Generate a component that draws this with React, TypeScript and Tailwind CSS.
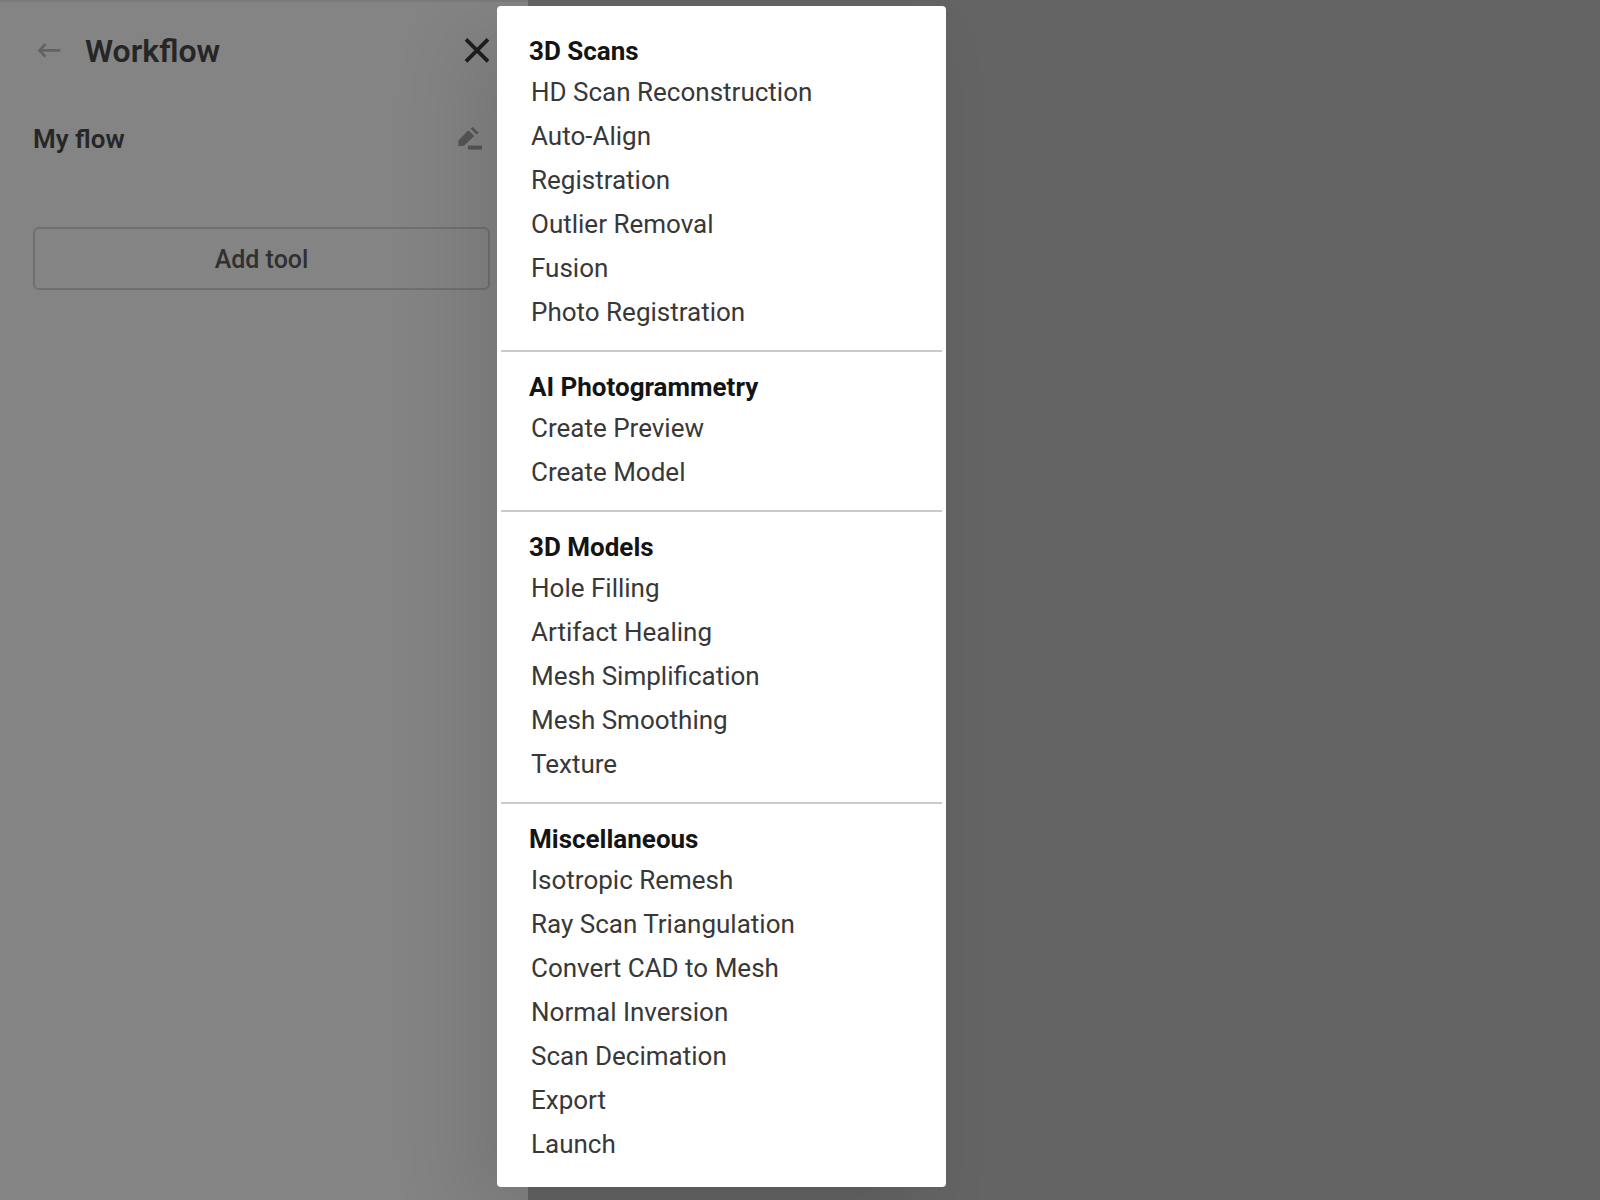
type ToolGroup = {
  title: string;
  tools: string[];
};

const GROUPS: ToolGroup[] = [
  {
    title: "3D Scans",
    tools: [
      "HD Scan Reconstruction",
      "Auto-Align",
      "Registration",
      "Outlier Removal",
      "Fusion",
      "Photo Registration",
    ],
  },
  { title: "AI Photogrammetry", tools: ["Create Preview", "Create Model"] },
  {
    title: "3D Models",
    tools: ["Hole Filling", "Artifact Healing", "Mesh Simplification", "Mesh Smoothing", "Texture"],
  },
  {
    title: "Miscellaneous",
    tools: [
      "Isotropic Remesh",
      "Ray Scan Triangulation",
      "Convert CAD to Mesh",
      "Normal Inversion",
      "Scan Decimation",
      "Export",
      "Launch",
    ],
  },
];

function BackIcon() {
  return (
    <svg width="24" height="24" viewBox="0 0 24 24" fill="none" stroke="currentColor" strokeWidth="2.6" aria-hidden="true">
      <path d="M23.4 11.4H3M8.4 5.2 2.4 11.4 8.4 17.6" />
    </svg>
  );
}

function CloseIcon() {
  return (
    <svg width="26" height="26" viewBox="0 0 26 26" fill="none" stroke="currentColor" strokeWidth="3.8" aria-hidden="true">
      <path d="M2 1.4 24 23.4M24 1.4 2 23.4" />
    </svg>
  );
}

function RenameIcon() {
  return (
    <svg width="24" height="24" viewBox="0 0 24 24" fill="currentColor" aria-hidden="true">
      <path d="M.4 19.2.4 13.4 10.4 3.2 16.2 9 6 18.8Z" />
      <path d="M12.6 1.4 14.6 0 20.6 5.8 18.6 7.4Z" />
      <path d="M10 18.6H24V22.6H10Z" />
    </svg>
  );
}

function WorkflowPanel() {
  return (
    <aside className="w-[528px] shrink-0 border-t-2 border-[#7a7a7a] bg-[#848484] pr-[38px] pl-[33px] text-[#262626]">
      <header className="flex items-center pt-[29px]">
        <button type="button" aria-label="Back" className="ml-1 text-[#626262]">
          <BackIcon />
        </button>
        <h1 className="ml-6 flex-1 text-[32px] leading-10 font-semibold">Workflow</h1>
        <button type="button" aria-label="Close" className="text-[#1e1e1e]">
          <CloseIcon />
        </button>
      </header>

      <div className="mt-[52px] flex items-center justify-between pr-2">
        <h2 className="text-[26px] leading-8 font-semibold">My flow</h2>
        <button type="button" aria-label="Rename flow" className="text-[#565656]">
          <RenameIcon />
        </button>
      </div>

      <button
        type="button"
        className="mt-[72px] h-[63px] w-full rounded-md border-2 border-[#707070] pt-0.5 text-[25px] leading-8 font-medium text-[#303030]"
      >
        Add tool
      </button>
    </aside>
  );
}

function ToolMenu() {
  return (
    <div
      role="menu"
      className="absolute top-[6px] left-[497px] w-[449px] rounded-[4px] bg-white p-1 pb-[5px] shadow-[-30px_30px_80px_rgba(0,0,0,0.11)]"
    >
      {GROUPS.map((group) => (
        <section
          key={group.title}
          className="border-t-2 border-[#cacaca] pt-[23px] pb-4 first:border-t-0 first:pt-[29px]"
        >
          <h3 className="mb-[7px] px-7 text-[26px] leading-6 font-bold text-[#141414]">{group.title}</h3>
          {group.tools.map((tool) => (
            <button
              key={tool}
              type="button"
              role="menuitem"
              className="block h-11 w-full px-[30px] text-left text-[26px] leading-8 text-[#383838]"
            >
              {tool}
            </button>
          ))}
        </section>
      ))}
    </div>
  );
}

export default function App() {
  return (
    <div className="relative flex min-h-screen bg-[#646464] font-['Roboto','Liberation_Sans',sans-serif]">
      <WorkflowPanel />
      <ToolMenu />
    </div>
  );
}
